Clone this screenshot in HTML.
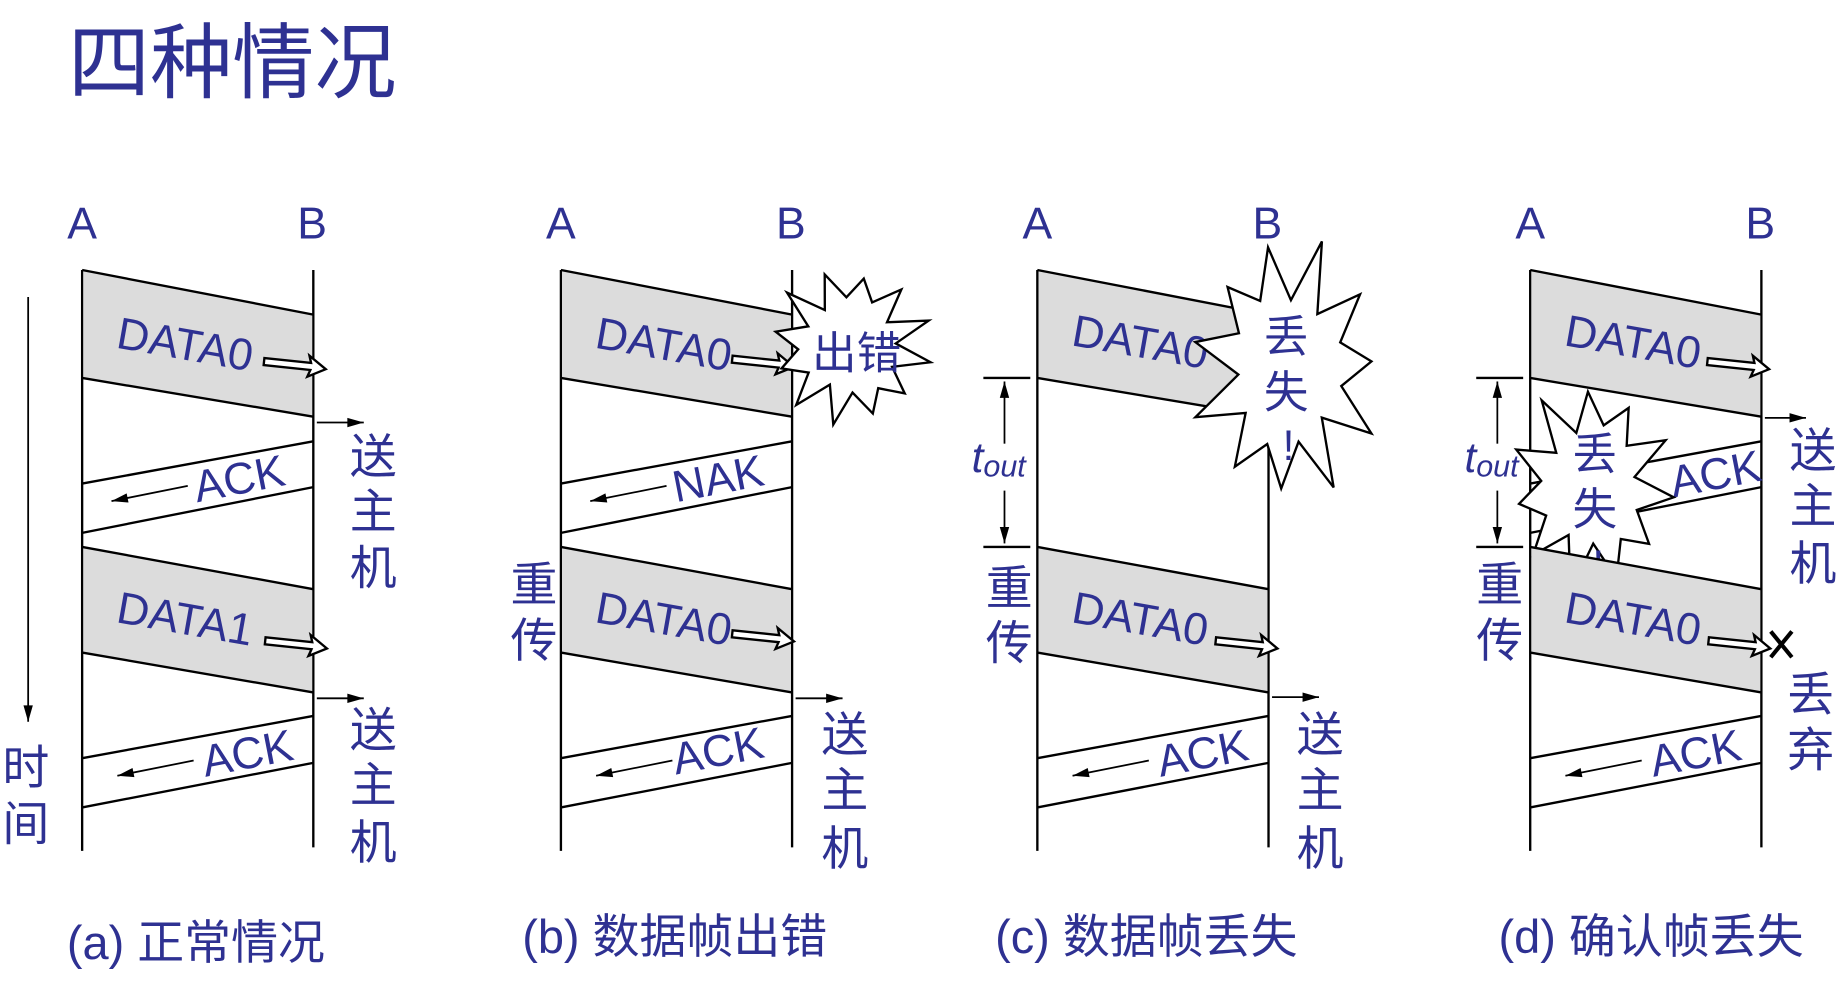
<!DOCTYPE html>
<html><head><meta charset="utf-8"><style>
html,body{margin:0;padding:0;background:#fff;}
svg{display:block}
text{font-family:"Liberation Sans","Noto Sans CJK SC",sans-serif;fill:#2e3192}
</style></head><body>
<svg id="s" width="1840" height="1000" viewBox="0 0 1568 852" xmlns="http://www.w3.org/2000/svg">
<text x="58" y="78" font-size="70">四种情况</text>
</svg>
<script>
const s=document.getElementById('s');let h='';
const T=(x,y,t,fs,extra)=>`<text x="${x}" y="${y}" font-size="${fs}" ${extra||''}>${t}</text>`;
const L=(x1,y1,x2,y2,w)=>`<line x1="${x1}" y1="${y1}" x2="${x2}" y2="${y2}" stroke="#000" stroke-width="${w||2}"/>`;
function band(o,y1,y2,y3,y4,grey){
 if(grey)h+=`<polygon points="${o+71},${y1} ${o+266},${y2} ${o+266},${y4} ${o+71},${y3}" fill="#dcdcdc"/>`;
 h+=L(o+70,y1,o+267,y2)+L(o+70,y3,o+267,y4);
}
function hollow(x,y){h+=`<polygon transform="translate(${x},${y}) rotate(6)" points="0,-3 40,-3 38,-9 53,1 38,9 40,3 0,3" fill="#fff" stroke="#000" stroke-width="2"/>`;}
function small(x1,y1,x2,y2){const a=Math.atan2(y2-y1,x2-x1)*180/Math.PI;h+=L(x1,y1,x2,y2,1.5)+`<polygon transform="translate(${x2},${y2}) rotate(${a})" points="0,0 -14,-4 -14,4"/>`;}
function vtext(x,ys,ch,fs){ch.forEach((c,i)=>h+=T(x,ys[i],c,fs,'text-anchor="middle"'));}
function star(cx,cy,rx,ry,ri,n,seed){let p=[];for(let i=0;i<2*n;i++){const a=i*Math.PI/n+seed;const k=i%2?ri:1;const m=1+0.08*Math.sin(i*2.3+seed*5);p.push((cx+rx*k*m*Math.cos(a)).toFixed(1)+','+(cy+ry*k*m*Math.sin(a)).toFixed(1));}h+=`<polygon points="${p.join(' ')}" fill="#fff" stroke="#000" stroke-width="2"/>`;}
function tout(o){h+=L(o-46,322,o-6,322)+L(o-46,466,o-6,466);small(o-28,378,o-28,325);small(o-28,418,o-28,463);
 h+=`<text x="${o-56}" y="402" font-size="36" font-style="italic">t<tspan font-size="26" dy="4">out</tspan></text>`;}
function data(o,y,lbl){h+=T(o+98,y,lbl,38,`transform="rotate(10 ${o+98} ${y})"`);}
function ack(o,x,y,lbl){h+=T(o+x,y,lbl,38,`transform="rotate(-11 ${o+x} ${y})"`);}
function base(o){h+=L(o+70,230,o+70,725)+L(o+267,230,o+267,722);h+=T(o+70,203,'A',38,'text-anchor="middle"')+T(o+266,203,'B',38,'text-anchor="middle"');}
// panel a
let o=0;base(o);
band(o,230,268,322,355,1);data(o,296,'DATA0');hollow(o+225,308);small(o+270,360,o+310,360);vtext(o+318,[403,450,498],['送','主','机'],40);
band(o,412,376,454,415,0);ack(o,168,428,'ACK');small(o+160,414,o+95,427);
band(o,466,502,556,590,1);data(o,530,'DATA1');hollow(o+226,546);small(o+270,595,o+310,595);vtext(o+318,[636,683,732],['送','主','机'],40);
band(o,646,610,688,650,0);ack(o,175,662,'ACK');small(o+165,648,o+100,661);
small(24,253,24,615);vtext(22,[668,716],['时','间'],40);
h+=T(57,817,'(a) 正常情况',40);
// panel b
o=408;base(o);
band(o,230,268,322,355,1);data(o,296,'DATA0');hollow(o+216,306);
star(o+316,295,66,64,0.62,12,0.2);h+=T(o+284,314,'出错',38);
band(o,412,376,454,415,0);ack(o,168,428,'NAK');small(o+160,414,o+95,427);
vtext(o+47,[512,560],['重','传'],40);
band(o,466,502,556,590,1);data(o,530,'DATA0');hollow(o+216,540);small(o+270,595,o+310,595);vtext(o+312,[640,687,737],['送','主','机'],40);
band(o,646,610,688,650,0);ack(o,168,660,'ACK');small(o+165,648,o+100,661);
h+=T(445,812,'(b) 数据帧出错',40);
// panel c
o=814;base(o);
band(o,230,268,322,355,1);data(o,294,'DATA0');
star(o+283,315,78,108,0.58,11,0.5);vtext(o+282,[300,347],['丢','失'],38);h+=T(o+284,392,'!',36,'text-anchor="middle"');
tout(o+70);vtext(o+46,[515,562],['重','传'],40);
band(o,466,502,556,590,1);data(o,530,'DATA0');hollow(o+222,546);small(o+270,594,o+310,594);vtext(o+311,[640,687,737],['送','主','机'],40);
band(o,646,610,688,650,0);ack(o,175,662,'ACK');small(o+165,648,o+100,661);
h+=T(848,812,'(c) 数据帧丢失',40);
// panel d
o=1234;base(o);
band(o,230,268,322,355,1);data(o,294,'DATA0');hollow(o+221,308);small(o+270,356,o+305,356);vtext(o+311,[398,445,494],['送','主','机'],40);
band(o,412,376,454,415,0);ack(o,192,424,'ACK');
star(o+122,415,68,84,0.6,11,0.1);vtext(o+125,[400,447],['丢','失'],38);h+=T(o+128,494,'!',36,'text-anchor="middle"');
tout(o+70);vtext(o+44,[512,560],['重','传'],40);
band(o,466,502,556,590,1);data(o,530,'DATA0');hollow(o+222,546);
h+=L(o+275,538,o+293,560,3.5)+L(o+293,538,o+275,560,3.5);
vtext(o+309,[606,653],['丢','弃'],40);
band(o,646,610,688,650,0);ack(o,175,662,'ACK');small(o+165,648,o+100,661);
h+=T(1277,812,'(d) 确认帧丢失',40);
s.insertAdjacentHTML('beforeend',h);
</script>
</body></html>
